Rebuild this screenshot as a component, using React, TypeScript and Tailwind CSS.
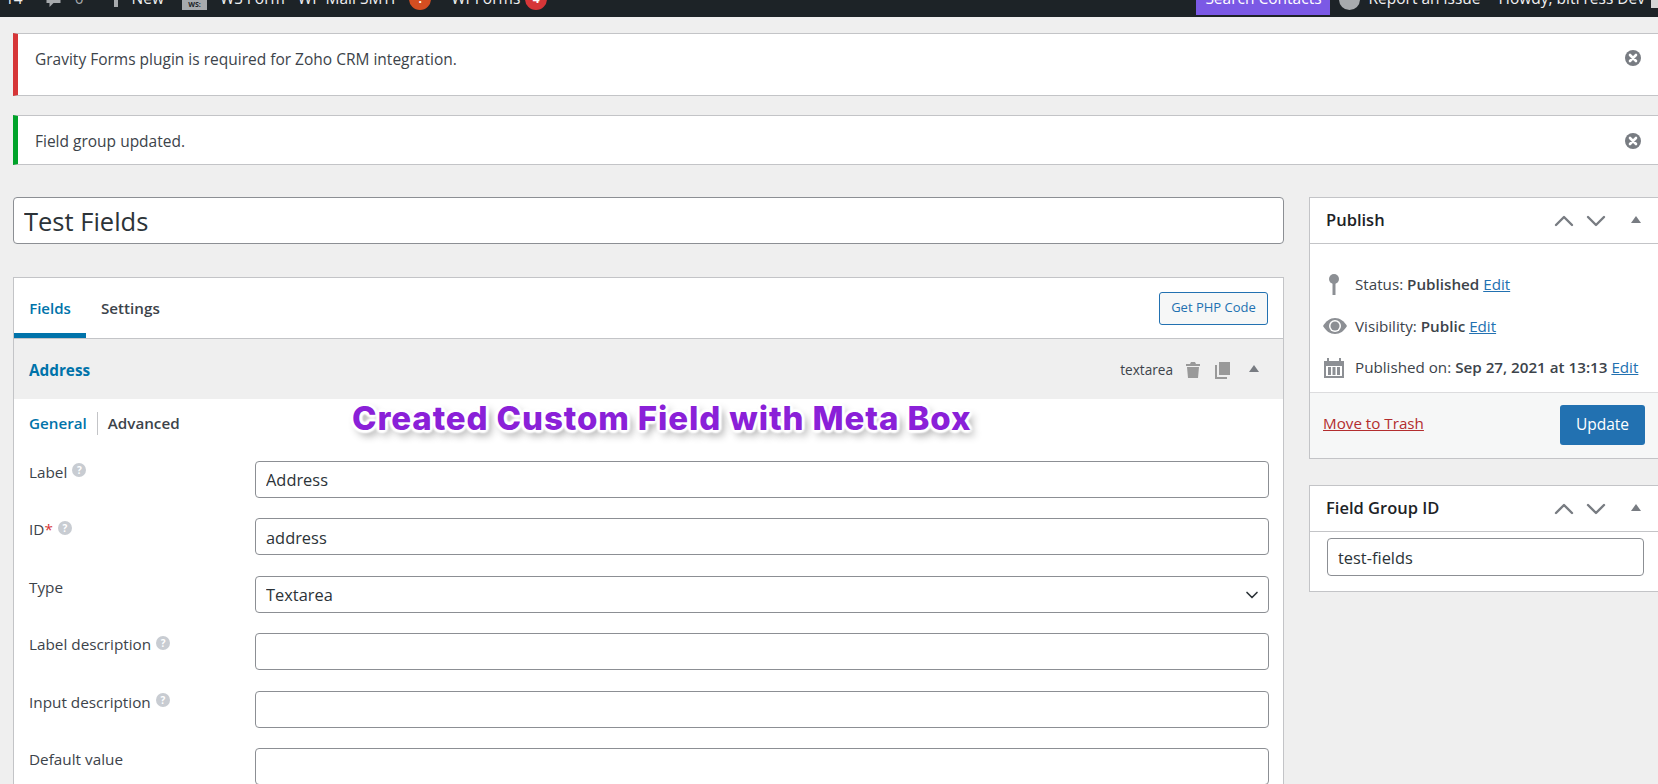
import { ChevronDown, ChevronUp } from "lucide-react";

const FONT = "font-['Open_Sans','Noto_Sans',sans-serif]";

// ── Small drawn icons (dashicons look-alikes) ─────────────────────────────────

function Dismiss() {
  return (
    <svg width="16" height="16" viewBox="0 0 16 16" className="shrink-0">
      <circle cx="8" cy="8" r="8" fill="#787c82" />
      <path d="M5 5l6 6M11 5l-6 6" stroke="#fff" strokeWidth="2.6" strokeLinecap="round" />
    </svg>
  );
}

function Triangle({ className = "" }: { className?: string }) {
  return (
    <svg width="10" height="7" viewBox="0 0 10 7" className={className}>
      <path d="M5 0l5 7H0z" fill="#787c82" />
    </svg>
  );
}

function Help() {
  return (
    <span className="ml-[5px] inline-flex h-[14px] w-[14px] -translate-y-[2px] items-center justify-center rounded-full bg-[#c8ccd2] text-[10px] leading-none font-bold text-white">
      ?
    </span>
  );
}

function BoxHeader({ title }: { title: string }) {
  return (
    <div className="flex items-center border-b border-[#c3c4c7] pl-4">
      <h2 className="text-[16.5px] font-semibold text-[#1d2327]">{title}</h2>
      <div className="ml-auto flex items-center pr-[17px] text-[#787c82]">
        <ChevronUp size={32} strokeWidth={1.8} />
        <ChevronDown size={32} strokeWidth={1.8} />
        <Triangle className="ml-[19px] mb-[2px]" />
      </div>
    </div>
  );
}

// ── Form row ──────────────────────────────────────────────────────────────────

function FieldRow({
  label,
  value = "",
  help = true,
  required = false,
  select = false,
}: {
  label: string;
  value?: string;
  help?: boolean;
  required?: boolean;
  select?: boolean;
}) {
  return (
    <div className="flex h-[57.5px] items-start">
      <div className="flex w-[226px] items-center text-[15.3px] text-[#3c434a]">
        {label}
        {required && <span className="text-[#d63638]">*</span>}
        {help && <Help />}
      </div>
      <div className="relative w-[1014px]">
        <input
          readOnly
          value={value}
          className="h-[37px] w-full rounded-[4px] border border-[#8c8f94] bg-white px-[10px] pt-[1px] text-[16.4px] text-[#2c3338] outline-none"
        />
        {select && (
          <ChevronDown
            size={20}
            strokeWidth={2}
            className="absolute top-[9px] right-[7px] text-[#2c3338]"
          />
        )}
      </div>
    </div>
  );
}

export default function App() {
  return (
    <div className={`relative h-[784px] w-[1658px] overflow-hidden bg-[#efefef] ${FONT}`}>
      {/* Admin bar, scrolled so only its lower part shows */}
      <div className="h-[17px] overflow-hidden bg-[#1d2327]">
        <div className="-mt-[17px] flex h-[32px] items-center text-[15.5px] text-[#f0f0f1]">
          <span className="ml-[5px]">14</span>
          <svg width="17" height="16" viewBox="0 0 16 16" className="ml-[22px] mt-[2px]">
            <path d="M1 2h14v9H8l-4 4v-4H1z" fill="#a7aaad" />
          </svg>
          <span className="ml-[13px] text-[#a7aaad]">0</span>
          <svg width="12" height="18" viewBox="0 0 12 18" className="ml-[26px] -mt-[2px]">
            <path d="M4 0h4v7h4v4H8v7H4v-7H0V7h4z" fill="#a7aaad" />
          </svg>
          <span className="ml-[10px]">New</span>
          <div className="ml-[18px] flex h-[27px] w-[25px] items-end justify-center self-start bg-[#a7aaad] text-[7px] font-bold text-[#1d2327]">
            WS:
          </div>
          <span className="ml-[13px]">WS Form</span>
          <span className="ml-[13px]">WP Mail SMTP</span>
          <span className="ml-[9px] flex h-[22px] w-[22px] items-center justify-center rounded-full bg-[#d54e21] text-[12px] font-bold text-white">
            !
          </span>
          <span className="ml-[20px]">WPForms</span>
          <span className="ml-[5px] flex h-[22px] w-[22px] items-center justify-center rounded-full bg-[#d63638] text-[12px] font-bold text-white">
            4
          </span>
          <div className="-mr-[1px] ml-auto flex h-full items-center">
            <span className="-mt-[18px] flex h-[50px] w-[134px] items-center justify-center bg-[#7b59e5] pt-[18px] text-white">
              Search Contacts
            </span>
            <span className="ml-[9px] h-[21px] w-[21px] rounded-full bg-[#a7aaad]" />
            <span className="ml-[8px]">Report an issue</span>
            <span className="ml-[18px]">Howdy, bitFress Dev</span>
            <span className="ml-[6px] h-[18px] w-[8px] bg-[#d5d5d5]" />
          </div>
        </div>
      </div>

      {/* Notices */}
      <div className="ml-[13px] mt-[16px] flex h-[63px] items-start border-y border-y-[#c3c4c7] border-l-[5px] border-l-[#d63638] bg-white pl-[17px] pr-[17px] pt-[14px] text-[15.5px] text-[#3c434a]">
        <p>Gravity Forms plugin is required for Zoho CRM integration.</p>
        <span className="ml-auto mt-[2px]"><Dismiss /></span>
      </div>
      <div className="ml-[13px] mt-[19px] flex h-[50px] items-start border-y border-y-[#c3c4c7] border-l-[5px] border-l-[#00a32a] bg-white pl-[17px] pr-[17px] pt-[14px] text-[15.5px] text-[#3c434a]">
        <p>Field group updated.</p>
        <span className="ml-auto mt-[3px]"><Dismiss /></span>
      </div>

      {/* Editor columns */}
      <div className="mt-[32px] flex items-start pl-[13px]">
        <div className="w-[1271px] shrink-0">
          <input
            readOnly
            value="Test Fields"
            className="h-[47px] w-full rounded-[4px] border border-[#8c8f94] bg-white px-[10px] text-[25.5px] text-[#2c3338] outline-none"
          />

          <div className="mt-[33px] border border-[#c3c4c7] bg-white">
            <div className="flex h-[61px] items-stretch border-b border-[#c3c4c7] pr-[15px]">
              <div className="flex w-[72px] items-center justify-center border-b-[5px] border-[#0073aa] pt-[5px] text-[15px] font-semibold text-[#0073aa]">
                Fields
              </div>
              <div className="ml-[15px] flex items-center text-[15.2px] font-semibold text-[#3c434a]">
                Settings
              </div>
              <button className="my-auto ml-auto h-[33px] w-[109px] rounded-[3px] border border-[#2271b1] bg-[#f6f7f7] text-[13px] text-[#2271b1]">
                Get PHP Code
              </button>
            </div>

            <div className="flex h-[60px] items-center bg-[#efefef] pl-[15px] pr-[24px] pt-[2px]">
              <span className="pt-[1px] text-[15.3px] font-bold text-[#0073aa]">Address</span>
              <span className="ml-auto text-[13.6px] text-[#3c434a]">textarea</span>
              <svg width="14" height="16" viewBox="0 0 14 16" className="ml-[13px]">
                <path d="M5 0h4l1 2h4v2H0V2h4zM1 5h12l-1 11H2z" fill="#999" />
              </svg>
              <svg width="15" height="17" viewBox="0 0 15 17" className="ml-[15px]">
                <path d="M4 0h11v13H4z" fill="#999" />
                <path d="M0 3h2v12h10v2H0z" fill="#999" />
              </svg>
              <Triangle className="ml-[19px] mb-[4px]" />
            </div>

            <div className="flex items-center px-[15px] pt-[13px] text-[15.2px]">
              <span className="pr-[10px] font-semibold text-[#0073aa]">General</span>
              <span className="border-l border-[#c3c4c7] pl-[10px] font-semibold text-[#3c434a]">
                Advanced
              </span>
            </div>

            <div className="mt-[26px] pl-[15px]">
              <FieldRow label="Label" value="Address" />
              <FieldRow label="ID" value="address" required />
              <FieldRow label="Type" value="Textarea" help={false} select />
              <FieldRow label="Label description" />
              <FieldRow label="Input description" />
              <FieldRow label="Default value" help={false} />
            </div>
          </div>
        </div>

        {/* Sidebar */}
        <div className="ml-[25px] w-[349px] shrink-0">
          <div className="border border-r-0 border-[#c3c4c7] bg-white">
            <div className="[&>div]:h-[46px]">
              <BoxHeader title="Publish" />
            </div>
            <div className="px-[13px] pt-[19px] pb-[4px] text-[15.2px] text-[#3c434a]">
              <div className="flex h-[42px] items-center">
                <svg width="12" height="21" viewBox="0 0 12 21" className="ml-[5px] mr-[15px]">
                  <circle cx="6" cy="5" r="5" fill="#8c8f94" />
                  <path d="M4.5 8h3v13h-3z" fill="#8c8f94" />
                </svg>
                <span>Status: <b className="font-semibold">Published</b> <a className="text-[#2271b1] underline">Edit</a></span>
              </div>
              <div className="flex h-[42px] items-center">
                <svg width="24" height="16" viewBox="0 0 24 16" className="mr-[8px]">
                  <path d="M0 8c3-5 7-8 12-8s9 3 12 8c-3 5-7 8-12 8S3 13 0 8z" fill="#8c8f94" />
                  <circle cx="12" cy="8" r="6" fill="#fff" />
                  <circle cx="12" cy="8" r="4.5" fill="#8c8f94" />
                </svg>
                <span>Visibility: <b className="font-semibold">Public</b> <a className="text-[#2271b1] underline">Edit</a></span>
              </div>
              <div className="flex h-[41px] items-center">
                <svg width="20" height="20" viewBox="0 0 20 20" className="ml-[1px] mr-[11px]">
                  <path d="M0 3h3V0h2v3h10V0h2v3h3v17H0zM2 8v10h16V8z" fill="#8c8f94" />
                  <path d="M4 9h3v8H4zM8.5 9h3v8h-3zM13 9h3v8h-3z" fill="#8c8f94" />
                </svg>
                <span className="whitespace-nowrap">Published on: <b className="font-semibold">Sep 27, 2021 at 13:13</b> <a className="text-[#2271b1] underline">Edit</a></span>
              </div>
            </div>
            <div className="flex h-[66px] items-center border-t border-[#dcdcde] bg-[#f6f7f7] pl-[13px] pr-[13px]">
              <a className="-mt-[4px] text-[15.2px] text-[#b32d2e] underline">Move to Trash</a>
              <button className="-mt-[2px] ml-auto h-[40px] w-[85px] rounded-[3px] bg-[#2271b1] pt-[1px] text-[15.5px] text-white">
                Update
              </button>
            </div>
          </div>

          <div className="mt-[26px] border border-r-0 border-[#c3c4c7] bg-white pb-[15px]">
            <div className="[&>div]:h-[46px]">
              <BoxHeader title="Field Group ID" />
            </div>
            <div className="pl-[17px] pr-[14px] pt-[6px]">
              <input
                readOnly
                value="test-fields"
                className="h-[38px] w-[317px] rounded-[4px] border border-[#8c8f94] bg-white px-[10px] text-[16.4px] text-[#2c3338] outline-none"
              />
            </div>
          </div>
        </div>
      </div>

      {/* Caption laid over the screenshot */}
      <div className="absolute top-[397px] left-[352px] font-['Inter',sans-serif] text-[33px] leading-[42px] font-extrabold tracking-[0.9px] whitespace-nowrap text-[#8a20d8] [text-shadow:0_0_2px_#fff,3px_0_2px_#fff,-3px_0_2px_#fff,0_3px_2px_#fff,0_-3px_2px_#fff,2px_2px_2px_#fff,-2px_-2px_2px_#fff,2px_-2px_2px_#fff,-2px_2px_2px_#fff,4px_5px_8px_rgba(0,0,0,0.45)]">
        Created Custom Field with Meta Box
      </div>
    </div>
  );
}
